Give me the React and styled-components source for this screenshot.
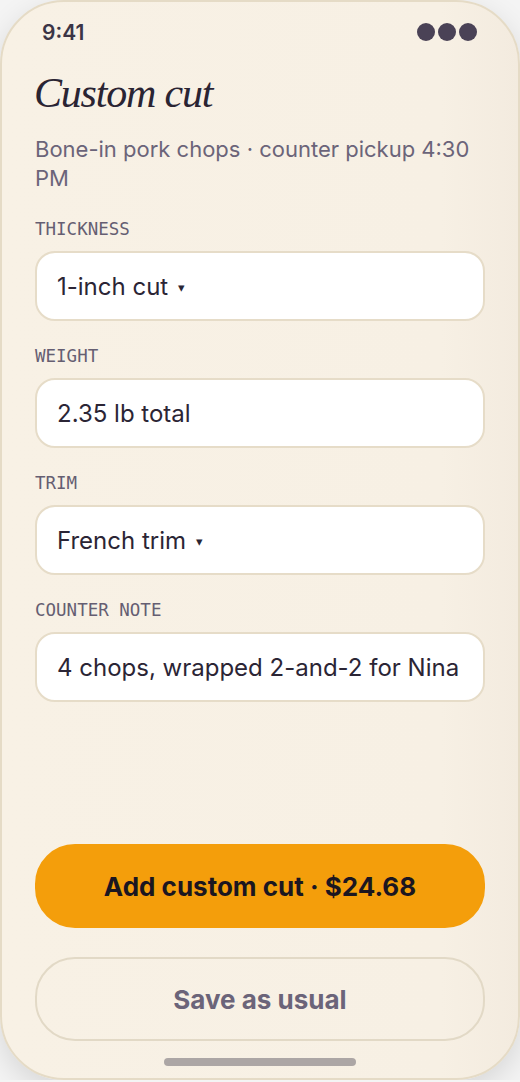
import React from "react";
import styled, { createGlobalStyle } from "styled-components";

const Global = createGlobalStyle`
  html, body {
    margin: 0;
    padding: 0;
    background: #f4f4f4;
  }
  * {
    box-sizing: border-box;
  }
`;

const Phone = styled.div`
  width: 520px;
  height: 1080px;
  border: 2px solid #e5dbc6;
  border-radius: 64px;
  background: linear-gradient(90deg, #f8f1e5 0%, #f7f0e4 85%, #f3ebdf 100%);
  box-shadow: 0 10px 30px rgba(0, 0, 0, 0.12);
  display: flex;
  flex-direction: column;
  padding: 18px 33px 12px;
  font-family: Inter, "Noto Sans", sans-serif;
  color: #2b2535;
  overflow: hidden;
`;

const StatusBar = styled.div`
  display: flex;
  align-items: center;
  justify-content: space-between;
  height: 24px;
  padding: 0 8px 0 7px;
`;

const Time = styled.span`
  font-size: 21px;
  font-weight: 600;
  color: #3b3546;
`;

const Dots = styled.div`
  display: flex;
  gap: 3px;
`;

const Dot = styled.span`
  width: 18px;
  height: 18px;
  border-radius: 50%;
  background: #4a4256;
`;

const Title = styled.h1`
  margin: 25px 0 0 -1px;
  font-family: "Liberation Serif", "DejaVu Serif", serif;
  font-style: italic;
  font-weight: 400;
  font-size: 42px;
  line-height: 48px;
  color: #2a2433;
  letter-spacing: -1.2px;
`;

const Subtitle = styled.p`
  margin: 18px 0 0;
  font-size: 22px;
  line-height: 29px;
  color: #6b6479;
`;

const Form = styled.div`
  display: flex;
  flex-direction: column;
  gap: 25px;
  margin-top: 26px;
`;

const Group = styled.div`
  display: flex;
  flex-direction: column;
  gap: 12px;
`;

const Label = styled.div`
  font-family: "DejaVu Sans Mono", "Liberation Mono", monospace;
  font-size: 17.5px;
  line-height: 20px;
  color: #655e72;
`;

const Field = styled.div`
  height: 70px;
  border: 2px solid #e6dcc8;
  border-radius: 20px;
  background: #ffffff;
  display: flex;
  align-items: center;
  gap: 10px;
  padding: 0 20px;
  font-size: 24px;
  color: #2b2535;
`;

const Caret = styled.span`
  font-size: 13px;
  color: #2b2535;
  margin-top: 2px;
`;

const Actions = styled.div`
  margin-top: auto;
  display: flex;
  flex-direction: column;
  gap: 29px;
`;

const Button = styled.button`
  height: 84px;
  border-radius: 40px;
  font-family: Inter, "Noto Sans", sans-serif;
  font-size: 26px;
  font-weight: 700;
  cursor: pointer;
  border: 2px solid ${({ primary }) => (primary ? "#f49e0b" : "#e2d9c6")};
  background: ${({ primary }) => (primary ? "#f49e0b" : "transparent")};
  color: ${({ primary }) => (primary ? "#1b1620" : "#6b6479")};
`;

const HomeBar = styled.div`
  align-self: center;
  width: 192px;
  height: 8px;
  border-radius: 4px;
  background: #aca6a5;
  margin-top: 17px;
`;

const fields = [
  { label: "THICKNESS", value: "1-inch cut", select: true },
  { label: "WEIGHT", value: "2.35 lb total" },
  { label: "TRIM", value: "French trim", select: true },
  { label: "COUNTER NOTE", value: "4 chops, wrapped 2-and-2 for Nina" },
];

export default function App() {
  return (
    <>
      <Global />
      <Phone>
        <StatusBar>
          <Time>9:41</Time>
          <Dots>
            <Dot />
            <Dot />
            <Dot />
          </Dots>
        </StatusBar>
        <Title>Custom cut</Title>
        <Subtitle>Bone-in pork chops · counter pickup 4:30 PM</Subtitle>
        <Form>
          {fields.map((f) => (
            <Group key={f.label}>
              <Label>{f.label}</Label>
              <Field>
                {f.value}
                {f.select && <Caret>▾</Caret>}
              </Field>
            </Group>
          ))}
        </Form>
        <Actions>
          <Button primary>Add custom cut · $24.68</Button>
          <Button>Save as usual</Button>
        </Actions>
        <HomeBar />
      </Phone>
    </>
  );
}
